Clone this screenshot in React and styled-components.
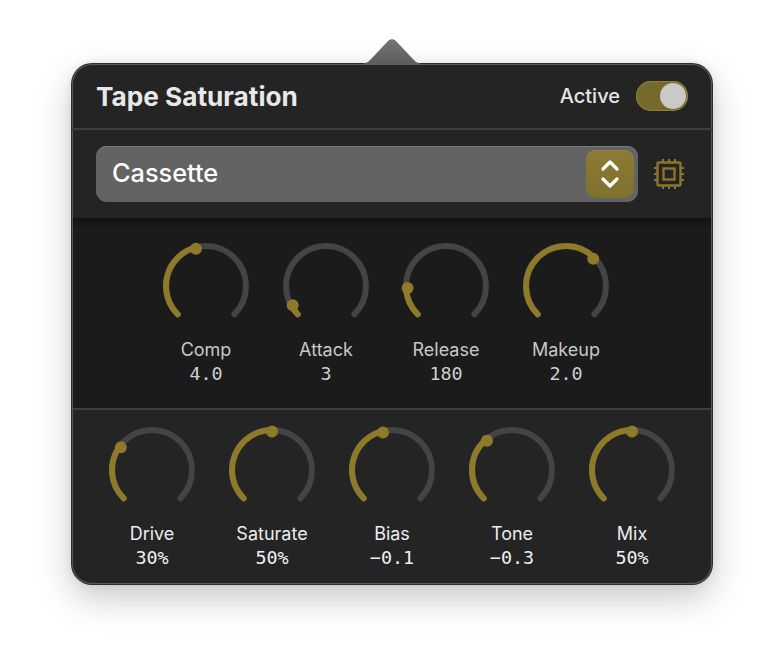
import React from 'react'
import styled, { createGlobalStyle } from 'styled-components'

const GlobalStyle = createGlobalStyle`
  html, body {
    margin: 0;
    background: #ffffff;
    font-family: Inter, "Liberation Sans", sans-serif;
  }
`

const Page = styled.div`
  width: 784px;
  height: 664px;
  padding: 64px 72px 80px;
  box-sizing: border-box;
  overflow: hidden;
`

const Panel = styled.div`
  position: relative;
  width: 640px;
  height: 520px;
  box-sizing: border-box;
  display: flex;
  flex-direction: column;
  background: #242424;
  border-radius: 20px;
  box-shadow: 0 0 0 1px #2e2e2e, inset 0 0 0 1px #5a5a5a, 0 14px 36px rgba(0, 0, 0, 0.22), 0 0 10px rgba(0, 0, 0, 0.1);
`

const Tail = styled.svg`
  position: absolute;
  left: 290px;
  top: -26px;
`

const Header = styled.div`
  height: 66px;
  flex: none;
  box-sizing: border-box;
  display: flex;
  align-items: center;
  justify-content: space-between;
  padding: 0 24px 0 24px;
  border-bottom: 2px solid #3f3f3f;
`

const Title = styled.div`
  font-size: 26.2px;
  font-weight: 700;
  color: #e8e8e8;
`

const ActiveGroup = styled.div`
  display: flex;
  align-items: center;
  gap: 16px;
`

const ActiveLabel = styled.span`
  font-size: 20px;
  font-weight: 500;
  color: #e6e6e6;
`

const Toggle = styled.div`
  width: 52px;
  height: 30px;
  box-sizing: border-box;
  display: flex;
  justify-content: flex-end;
  align-items: center;
  padding-right: 2px;
  border-radius: 15px;
  background: #756a2c;
  box-shadow: inset 0 0 0 1px #8f8238;
`

const Thumb = styled.div`
  width: 26px;
  height: 26px;
  border-radius: 50%;
  background: #c9c9c9;
`

const SelectRow = styled.div`
  height: 88px;
  flex: none;
  box-sizing: border-box;
  display: flex;
  align-items: center;
  gap: 15px;
  padding: 0 27px 0 24px;
`

const Select = styled.div`
  flex: 1;
  height: 56px;
  box-sizing: border-box;
  display: flex;
  align-items: center;
  justify-content: space-between;
  padding: 0 4px 0 16px;
  border-radius: 11px;
  background: #636363;
  box-shadow: inset 0 1px 0 #7a7a7a;
`

const SelectText = styled.span`
  font-size: 25.3px;
  line-height: 30px;
  margin-top: -3px;
  font-weight: 500;
  color: #ffffff;
`

const Stepper = styled.div`
  width: 48px;
  height: 48px;
  display: flex;
  align-items: center;
  justify-content: center;
  border-radius: 10px;
  background: linear-gradient(#8c7b33, #7f7030);
  box-shadow: inset 0 1px 0 #94843b;
`

const KnobSection = styled.div`
  display: flex;
  flex: none;
  height: ${p => p.$height}px;
  box-sizing: border-box;
  margin: 0 1px;
  padding: ${p => p.$top}px 0 0 ${p => p.$left}px;
  background: ${p => p.$dark ? 'linear-gradient(#131313 0, #1b1b1b 12px)' : 'transparent'};
  border-bottom: ${p => p.$dark ? '2px solid #3f3f3f' : 'none'};
`

const KnobColumn = styled.div`
  width: 120px;
  display: flex;
  flex-direction: column;
  align-items: center;
`

const KnobLabel = styled.div`
  margin-top: 10px;
  font-size: 18px;
  line-height: 24px;
  color: ${p => p.$bright ? '#ececec' : '#c8c8c8'};
`

const KnobValue = styled.div`
  font-family: "DejaVu Sans Mono", "Liberation Mono", monospace;
  font-size: 18.4px;
  line-height: 24px;
  color: ${p => p.$bright ? '#f0f0f0' : '#cfcfcf'};
`

const GOLD = '#8f7a2c'
const TRACK = '#444444'

function polar (fraction, radius) {
  const angle = (-135 + fraction * 270) * Math.PI / 180
  return { x: 48 + radius * Math.sin(angle), y: 48 - radius * Math.cos(angle) }
}

function arcPath (from, to) {
  const a = polar(from, 40)
  const b = polar(to, 40)
  const large = (to - from) * 270 > 180 ? 1 : 0
  return `M ${a.x} ${a.y} A 40 40 0 ${large} 1 ${b.x} ${b.y}`
}

function Knob ({ value }) {
  const dot = polar(value, 38.5)
  return (
    <svg width="96" height="90" viewBox="0 0 96 90">
      <path d={arcPath(0, 1)} fill="none" stroke={TRACK} strokeWidth="6" strokeLinecap="round" />
      <path d={arcPath(0, value)} fill="none" stroke={GOLD} strokeWidth="6" strokeLinecap="round" />
      <circle cx={dot.x} cy={dot.y} r="6" fill={GOLD} />
    </svg>
  )
}

function ChipIcon () {
  return (
    <svg width="32" height="32" viewBox="0 0 32 32" fill="none" stroke="#8c7629" strokeWidth="2.4">
      <rect x="4.5" y="4.5" width="23" height="23" rx="1.5" />
      <rect x="10.5" y="10.5" width="11" height="11" />
      <path strokeWidth="2" d="M10 1V4M16 1V4M22 1V4M10 28V31M16 28V31M22 28V31M1 10H4M1 16H4M1 22H4M28 10H31M28 16H31M28 22H31" />
    </svg>
  )
}

const topKnobs = [
  { label: 'Comp', value: '4.0', pos: 0.444 },
  { label: 'Attack', value: '3', pos: 0.055 },
  { label: 'Release', value: '180', pos: 0.156 },
  { label: 'Makeup', value: '2.0', pos: 0.667 }
]

const bottomKnobs = [
  { label: 'Drive', value: '30%', pos: 0.3 },
  { label: 'Saturate', value: '50%', pos: 0.5 },
  { label: 'Bias', value: '−0.1', pos: 0.45 },
  { label: 'Tone', value: '−0.3', pos: 0.35 },
  { label: 'Mix', value: '50%', pos: 0.5 }
]

export default function App () {
  return (
    <Page>
      <GlobalStyle />
      <Panel>
        <Tail width="60" height="28" viewBox="0 0 60 28">
          <defs>
            <linearGradient id="tailFill" x1="0" y1="0" x2="0" y2="1">
              <stop offset="0" stopColor="#757575" />
              <stop offset="1" stopColor="#5c5c5c" />
            </linearGradient>
          </defs>
          <path d="M0 26 C 5 26, 8 22, 11 19 L 26 3 C 28.5 0.5, 31.5 0.5, 34 3 L 49 19 C 52 22, 55 26, 60 26 L 60 27 L 0 27 Z" fill="url(#tailFill)" />
        </Tail>
        <Header>
          <Title>Tape Saturation</Title>
          <ActiveGroup>
            <ActiveLabel>Active</ActiveLabel>
            <Toggle><Thumb /></Toggle>
          </ActiveGroup>
        </Header>
        <SelectRow>
          <Select>
            <SelectText>Cassette</SelectText>
            <Stepper>
              <svg width="20" height="32" viewBox="0 0 20 32" fill="none" stroke="#ffffff" strokeWidth="3.2" strokeLinecap="round" strokeLinejoin="round">
                <path d="M3 11 L10 4 L17 11" />
                <path d="M3 21 L10 28 L17 21" />
              </svg>
            </Stepper>
          </Select>
          <ChipIcon />
        </SelectRow>
        <KnobSection $dark $height={192} $top={20} $left={73}>
          {topKnobs.map(k => (
            <KnobColumn key={k.label}>
              <Knob value={k.pos} />
              <KnobLabel>{k.label}</KnobLabel>
              <KnobValue>{k.value}</KnobValue>
            </KnobColumn>
          ))}
        </KnobSection>
        <KnobSection $height={174} $top={12} $left={19}>
          {bottomKnobs.map(k => (
            <KnobColumn key={k.label}>
              <Knob value={k.pos} />
              <KnobLabel $bright>{k.label}</KnobLabel>
              <KnobValue $bright>{k.value}</KnobValue>
            </KnobColumn>
          ))}
        </KnobSection>
      </Panel>
    </Page>
  )
}
